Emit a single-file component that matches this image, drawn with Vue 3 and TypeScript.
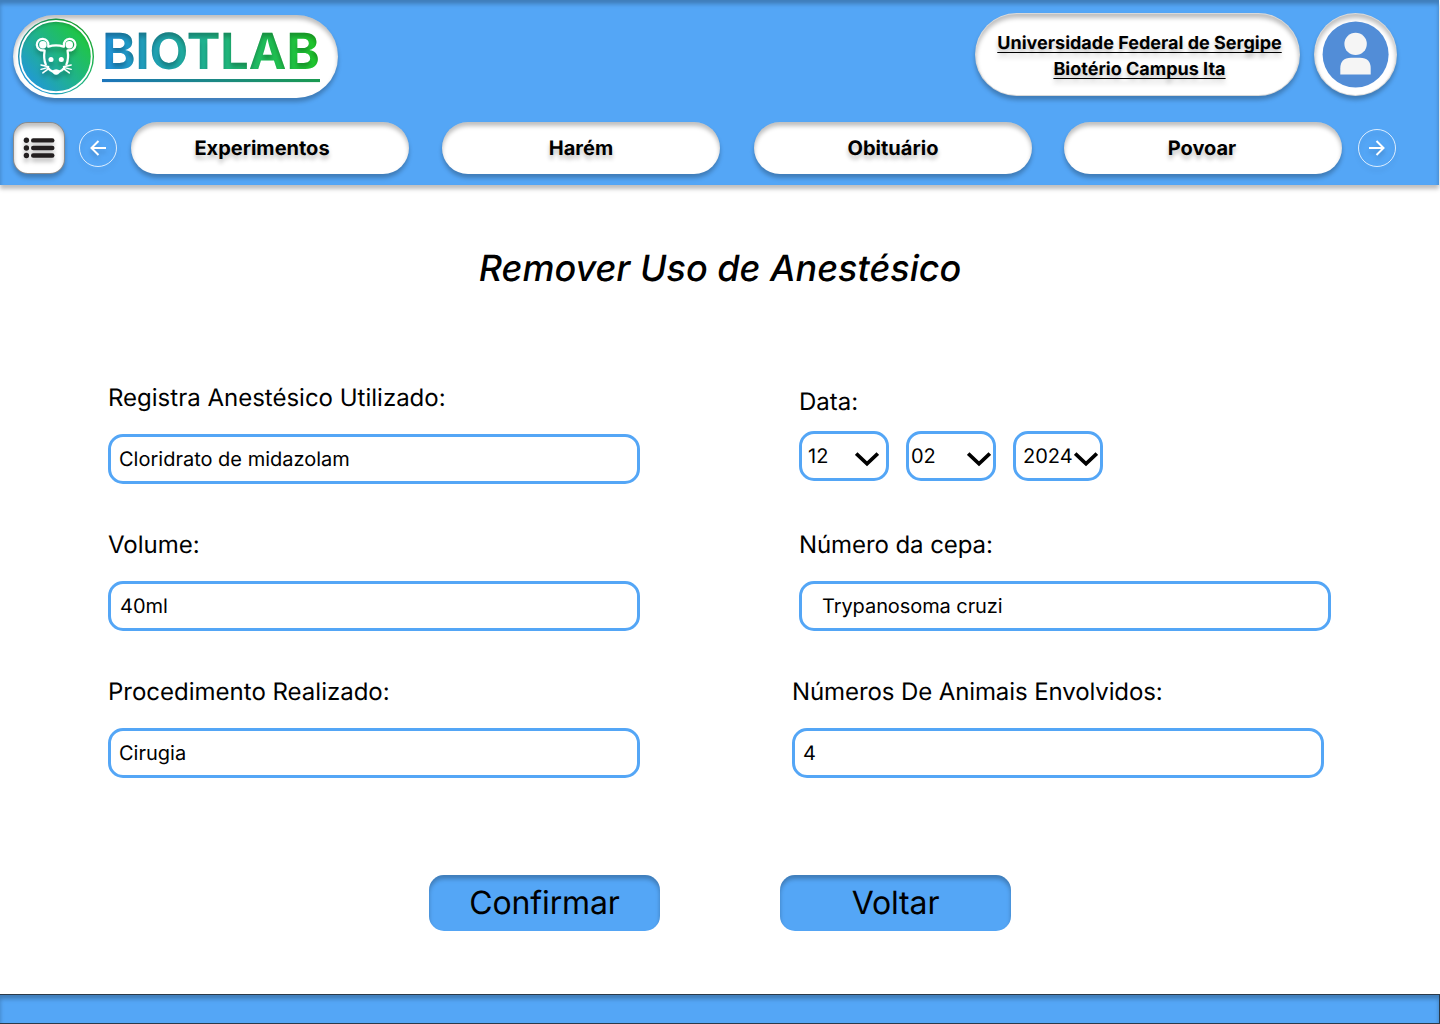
<script setup lang="ts">
interface Field {
  label: string
  value: string
  indent: number
}

interface DatePart {
  value: string
  indent: number
  arrow: number
}

const navItems: string[] = ['Experimentos', 'Harém', 'Obituário', 'Povoar']

const leftFields: Field[] = [
  { label: 'Registra Anestésico Utilizado:', value: 'Cloridrato de midazolam', indent: 8 },
  { label: 'Volume:', value: '40ml', indent: 9 },
  { label: 'Procedimento Realizado:', value: 'Cirugia', indent: 8 },
]

const dateParts: DatePart[] = [
  { value: '12', indent: 6, arrow: 8 },
  { value: '02', indent: 2, arrow: 3 },
  { value: '2024', indent: 7, arrow: 3 },
]
</script>

<template>
  <div class="page">
    <header class="header">
      <div class="top-row">
        <div class="brand">
          <svg class="brand-svg" width="325" height="83" viewBox="13 15 325 83">
            <defs>
              <linearGradient id="disc" x1="0.1" y1="0.85" x2="0.85" y2="0.2">
                <stop offset="0" stop-color="#2196dc" />
                <stop offset="0.5" stop-color="#20b28e" />
                <stop offset="1" stop-color="#1fc742" />
              </linearGradient>
              <linearGradient id="word" gradientUnits="userSpaceOnUse" x1="104" y1="70" x2="318" y2="40">
                <stop offset="0" stop-color="#2092dc" />
                <stop offset="0.5" stop-color="#20b58c" />
                <stop offset="1" stop-color="#1fc828" />
              </linearGradient>
              <linearGradient id="rule" gradientUnits="userSpaceOnUse" x1="102" y1="0" x2="320" y2="0">
                <stop offset="0" stop-color="#1c75bc" />
                <stop offset="1" stop-color="#1a9a50" />
              </linearGradient>
              <filter id="inner" x="-10%" y="-10%" width="120%" height="120%" color-interpolation-filters="sRGB">
                <feOffset in="SourceAlpha" dy="4" result="o" />
                <feGaussianBlur in="o" stdDeviation="2" result="b" />
                <feComposite in="SourceAlpha" in2="b" operator="out" result="s" />
                <feColorMatrix in="s" values="0 0 0 0 0  0 0 0 0 0  0 0 0 0 0  0 0 0 0.25 0" result="c" />
                <feMerge>
                  <feMergeNode in="SourceGraphic" />
                  <feMergeNode in="c" />
                </feMerge>
              </filter>
              <filter id="drop" x="-20%" y="-20%" width="140%" height="150%">
                <feDropShadow dx="0" dy="4" stdDeviation="2" flood-opacity="0.25" />
              </filter>
            </defs>
            <g filter="url(#inner)">
              <circle cx="56" cy="56.5" r="38" fill="url(#disc)" />
            </g>
            <circle cx="56" cy="56.5" r="35.7" fill="none" stroke="#fff" stroke-width="1.8" />
            <g filter="url(#drop)" fill="none" stroke="#fff" stroke-width="2.2" stroke-linecap="round">
              <path d="M43.6 50.3 A5.8 5.8 0 1 1 48.3 45.6 M68.6 50.3 A5.8 5.8 0 1 0 63.9 45.6" />
              <circle cx="42.9" cy="44.8" r="3.7" fill="#fff" stroke="none" />
              <circle cx="69.3" cy="44.8" r="3.7" fill="#fff" stroke="none" />
              <path d="M48.3 46.6 C53 45.2 59 45.2 63.9 46.6" />
              <path d="M44.6 50.6 C43.9 55 43.8 60 45.8 64.6 M67.6 50.6 C68.3 55 68.4 60 66.4 64.6" />
              <path d="M48.3 68.4 C50 70.6 51.6 71.2 54 72.2 M63.9 68.4 C62.2 70.6 60.6 71.2 58.2 72.2" />
              <circle cx="51" cy="59.5" r="2.5" fill="#fff" stroke="none" />
              <circle cx="61.3" cy="59.5" r="2.5" fill="#fff" stroke="none" />
              <path d="M51.8 71 Q56.1 67.3 60.4 71 Q59 74.4 56.1 74.8 Q53.2 74.4 51.8 71 Z" fill="#fff" stroke="none" />
              <path stroke-width="1.4" d="M41 65 L48.6 66.8 M41 69.4 L48.6 67.4 M42.8 72.9 L49 68.4 M71.2 65 L63.6 66.8 M71.2 69.4 L63.6 67.4 M69.4 72.9 L63.2 68.4" />
            </g>
            <text class="word" x="102.2" y="68.8" textLength="217.5" lengthAdjust="spacingAndGlyphs" fill="url(#word)" filter="url(#inner)">BIOTLAB</text>
            <rect x="102" y="79" width="218" height="3.1" fill="url(#rule)" />
          </svg>
        </div>
        <div class="institution">
          <span>Universidade Federal de Sergipe</span>
          <span>Biotério Campus Ita</span>
        </div>
        <div class="avatar">
          <svg width="66" height="66" viewBox="-0.6 -0.4 66 66">
            <circle cx="33" cy="33" r="33" fill="#528dd7" />
            <circle cx="33" cy="22.5" r="11.2" fill="#f5f5f5" />
            <path d="M17.7 53 V47 Q17.7 36.3 28.4 36.3 H37.4 Q48.1 36.3 48.1 47 V53 Z" fill="#f5f5f5" />
          </svg>
        </div>
      </div>
      <nav class="nav-row">
        <div class="menu">
          <svg width="32" height="28" viewBox="0 0 32 28">
            <g fill="#231f20">
              <circle cx="3.4" cy="4.3" r="2.7" />
              <circle cx="3.4" cy="12" r="2.7" />
              <circle cx="3.4" cy="19.5" r="2.7" />
              <rect x="8" y="2.2" width="23.5" height="4.4" rx="2.2" />
              <rect x="8" y="9.8" width="23.5" height="4.4" rx="2.2" />
              <rect x="8" y="17.3" width="23.5" height="4.4" rx="2.2" />
            </g>
          </svg>
        </div>
        <svg class="arrow prev" width="38" height="38" viewBox="0 0 38 38">
          <circle cx="19" cy="19" r="18.5" />
          <path d="M27 19 H12.5 M19.5 12 L12.5 19 L19.5 26" />
        </svg>
        <div class="nav-items">
          <div v-for="item in navItems" :key="item" class="nav-item">{{ item }}</div>
        </div>
        <svg class="arrow next" width="38" height="38" viewBox="0 0 38 38">
          <circle cx="19" cy="19" r="18.5" />
          <path d="M11 19 H25.5 M18.5 12 L25.5 19 L18.5 26" />
        </svg>
      </nav>
    </header>

    <main class="main">
      <h1>Remover Uso de Anestésico</h1>
      <div class="form">
        <div class="col">
          <div v-for="f in leftFields" :key="f.label" class="field">
            <div class="label">{{ f.label }}</div>
            <div class="box" :style="{ paddingLeft: f.indent + 'px' }">{{ f.value }}</div>
          </div>
        </div>
        <div class="col right">
          <div class="field date">
            <div class="label">Data:</div>
            <div class="dates">
              <div
                v-for="d in dateParts"
                :key="d.value"
                class="box select"
                :style="{ paddingLeft: d.indent + 'px', paddingRight: d.arrow + 'px' }"
              >
                <span>{{ d.value }}</span>
                <svg width="24" height="16" viewBox="0 0 24 16">
                  <path d="M1.2 1.6 L12 11.8 L22.8 1.6" fill="none" stroke="#000" stroke-width="3.7" />
                </svg>
              </div>
            </div>
          </div>
          <div class="field cepa">
            <div class="label">Número da cepa:</div>
            <div class="box strain">Trypanosoma cruzi</div>
          </div>
          <div class="field animals">
            <div class="label">Números De Animais Envolvidos:</div>
            <div class="box count">4</div>
          </div>
        </div>
      </div>
      <div class="actions">
        <button type="button">Confirmar</button>
        <button type="button">Voltar</button>
      </div>
    </main>

    <footer class="footer"></footer>
  </div>
</template>

<style>
body {
  margin: 0;
  background: #fff;
}
</style>

<style scoped>
.page {
  width: 1440px;
  height: 1024px;
  display: flex;
  flex-direction: column;
  overflow: hidden;
  font-family: Inter, 'Liberation Sans', sans-serif;
  text-rendering: geometricPrecision;
  color: #000;
  background: #fff;
}
.header {
  width: 1439px;
  height: 185px;
  flex: none;
  box-sizing: border-box;
  padding-top: 13px;
  background: #54a6f6;
  box-shadow: 0 4px 4px rgba(0, 0, 0, 0.25), inset 0 4px 4px rgba(0, 0, 0, 0.25);
}
.top-row {
  display: flex;
  align-items: flex-start;
  height: 109px;
  padding-left: 13px;
}
.brand,
.institution,
.avatar,
.menu,
.nav-item {
  box-sizing: border-box;
  background: #fff;
  box-shadow: 0 4px 4px rgba(0, 0, 0, 0.25), inset 0 4px 4px rgba(0, 0, 0, 0.25);
}
.brand {
  width: 325px;
  height: 83px;
  margin-top: 2px;
  border-radius: 42px;
}
.brand-svg {
  display: block;
}
.word {
  font-family: Inter, sans-serif;
  font-weight: 700;
  font-size: 50px;
}
.institution {
  width: 325px;
  height: 83px;
  margin-left: 637px;
  padding: 5px 0 0 4px;
  border-radius: 42px;
  border: 1px solid rgba(0, 0, 0, 0.15);
  display: flex;
  flex-direction: column;
  align-items: center;
  justify-content: center;
  font-size: 18px;
  font-weight: 700;
  line-height: 26px;
  white-space: nowrap;
  text-shadow: 0 4px 4px rgba(0, 0, 0, 0.25);
}
.institution span {
  text-decoration: underline;
  text-decoration-thickness: 1px;
  text-decoration-skip-ink: none;
  text-underline-offset: 3px;
}
.avatar {
  width: 83px;
  height: 83px;
  margin-left: 14px;
  padding: 0 1px 1px 0;
  border-radius: 50%;
  border: 1px solid rgba(0, 0, 0, 0.15);
  display: flex;
  align-items: center;
  justify-content: center;
}
.avatar svg {
  overflow: visible;
}
.nav-row {
  display: flex;
  align-items: center;
  height: 52px;
  padding-left: 13px;
}
.menu {
  width: 52px;
  height: 52px;
  border-radius: 15px;
  border: 1px solid rgba(0, 0, 0, 0.45);
  display: flex;
  align-items: center;
  justify-content: center;
}
.menu svg {
  margin-top: 4px;
  filter: drop-shadow(0 4px 2px rgba(0, 0, 0, 0.25));
}
.arrow {
  flex: none;
  fill: none;
  stroke: #fff;
  stroke-width: 2;
  overflow: visible;
  filter: drop-shadow(0 4px 2px rgba(0, 0, 0, 0.15));
}
.arrow circle {
  stroke-width: 0.8;
}
.prev {
  margin-left: 14px;
}
.next {
  margin-left: 16px;
}
.nav-items {
  display: flex;
  width: 1211px;
  margin-left: 14px;
}
.nav-item {
  width: 278px;
  height: 52px;
  border-radius: 26px;
  text-align: center;
  font-size: 20px;
  font-weight: 700;
  line-height: 52px;
  padding-right: 16px;
  text-shadow: 0 4px 4px rgba(0, 0, 0, 0.25);
}
.nav-item:nth-child(n + 2) {
  padding-right: 0;
  margin-left: 33px;
}
.nav-item:nth-child(3) {
  margin-left: 34px;
}
.nav-item:last-child {
  margin-left: 32px;
  padding-right: 2px;
}
.main {
  flex: none;
  height: 809px;
  display: flex;
  flex-direction: column;
  align-items: center;
}
h1 {
  margin: 61px 0 93px;
  font-size: 36px;
  font-style: italic;
  font-weight: 500;
  line-height: 44px;
  white-space: nowrap;
}
.form {
  width: 100%;
  height: 395px;
  display: flex;
  padding-left: 108px;
  box-sizing: border-box;
}
.col {
  width: 532px;
  display: flex;
  flex-direction: column;
  gap: 46px;
}
.right {
  margin-left: 159px;
}
.field {
  height: 101px;
  display: flex;
  flex-direction: column;
  justify-content: space-between;
}
.label {
  font-size: 24px;
  line-height: 29px;
  white-space: nowrap;
}
.box {
  box-sizing: border-box;
  width: 532px;
  height: 50px;
  border: 3px solid #54a6f6;
  border-radius: 15px;
  font-size: 20px;
  line-height: 44px;
}
.date {
  box-sizing: border-box;
  padding: 4px 0 3px;
}
.dates {
  display: flex;
  gap: 17px;
}
.select {
  width: 90px;
  display: flex;
  justify-content: space-between;
  align-items: center;
}
.select svg {
  flex: none;
  margin-top: 7px;
  margin-right: -1px;
  margin-left: -1px;
}
.strain {
  padding-left: 20px;
}
.count {
  padding-left: 8px;
}
.cepa {
  letter-spacing: -0.08px;
}
.animals {
  margin-left: -7px;
  letter-spacing: -0.1px;
}
.actions {
  display: flex;
  gap: 120px;
  margin-top: 97px;
}
button {
  width: 231px;
  height: 56px;
  padding: 0 0 2px;
  border: 0;
  border-radius: 15px;
  background: #54a6f6;
  box-shadow: inset 0 4px 4px rgba(0, 0, 0, 0.25);
  font-family: inherit;
  font-size: 32px;
  letter-spacing: -0.15px;
  text-rendering: inherit;
  color: #000;
}
.footer {
  flex: none;
  box-sizing: border-box;
  height: 30px;
  border: 1px solid #2b3a49;
  border-left: 0;
  background: #54a6f6;
  box-shadow: inset 0 4px 4px rgba(0, 0, 0, 0.25);
}
</style>
